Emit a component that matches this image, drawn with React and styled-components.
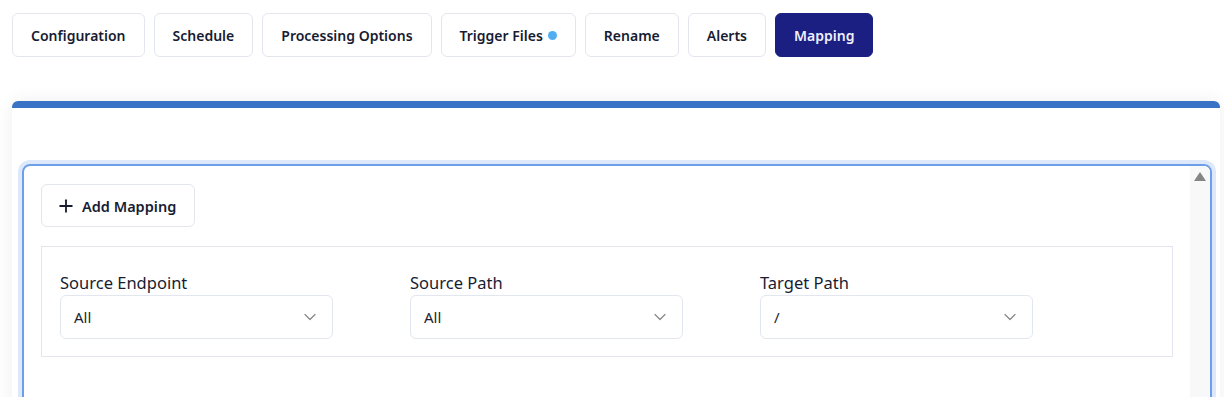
import React from 'react';
import styled, { createGlobalStyle } from 'styled-components';
import { Plus, ChevronDown } from 'lucide-react';

const GlobalStyle = createGlobalStyle`
	html, body {
		margin: 0;
		padding: 0;
		background: #fff;
		overflow: hidden;
		font-family: "Noto Sans", "Open Sans", sans-serif;
		color: #1e1e2d;
	}
	* {
		box-sizing: border-box;
	}
`;

const Page = styled.div`
	padding: 13px 4px 0 12px;
`;

const TabBar = styled.div`
	display: flex;
	gap: 9px;
	margin-bottom: 44px;
`;

const Tab = styled.button`
	display: flex;
	align-items: center;
	gap: 5px;
	height: 44px;
	padding: 0 18px;
	border: 1px solid ${p => (p.$active ? '#1b1f82' : '#e4e6ef')};
	border-radius: 6px;
	background: ${p => (p.$active ? '#1b1f82' : '#fff')};
	color: ${p => (p.$active ? '#eef0fb' : '#181c32')};
	font-family: inherit;
	font-size: 14px;
	font-weight: 600;
	cursor: pointer;
`;

const Dot = styled.span`
	width: 9px;
	height: 9px;
	border-radius: 50%;
	background: #52aef2;
`;

const Card = styled.div`
	background: #fff;
	border-top: 7px solid #3a72c6;
	border-radius: 6px 6px 0 0;
	box-shadow: 0 0 18px rgba(0, 0, 0, 0.07);
	padding: 56px 8px 0 10px;
`;

const Panel = styled.div`
	display: flex;
	height: 300px;
	border: 2px solid #6d9eea;
	border-radius: 8px;
	box-shadow: 0 0 0 4px #dde9fb;
	overflow: hidden;
`;

const PanelBody = styled.div`
	flex: 1;
	padding: 18px 17px 0 17px;
`;

const ScrollTrack = styled.div`
	width: 20px;
	background: #f8f8f8;
	display: flex;
	justify-content: center;
	padding-top: 6px;
`;

const ScrollArrow = styled.span`
	width: 0;
	height: 0;
	border-left: 6px solid transparent;
	border-right: 6px solid transparent;
	border-bottom: 9px solid #858585;
`;

const AddButton = styled.button`
	display: flex;
	align-items: center;
	gap: 6px;
	height: 43px;
	padding: 0 18px 0 14px;
	border: 1px solid #e4e6ef;
	border-radius: 6px;
	background: #fff;
	color: #181c32;
	font-family: inherit;
	font-size: 14.5px;
	font-weight: 600;
	margin-bottom: 19px;
	cursor: pointer;
`;

const MappingRow = styled.div`
	display: grid;
	grid-template-columns: repeat(3, 273px);
	column-gap: 77px;
	border: 1px solid #e4e6ef;
	padding: 26px 18px 17px;
`;

const Field = styled.div`
	display: flex;
	flex-direction: column;
`;

const Label = styled.label`
	font-size: 16.5px;
	line-height: 20px;
	color: #181c32;
	margin-bottom: 2px;
`;

const Select = styled.div`
	display: flex;
	align-items: center;
	justify-content: space-between;
	height: 44px;
	padding: 0 12px 0 13px;
	border: 1px solid #e2e6ee;
	border-radius: 6px;
	font-size: 15px;
	color: #1e1e2d;
	svg {
		color: #8a8a8a;
	}
`;

const tabs = ['Configuration', 'Schedule', 'Processing Options', 'Trigger Files', 'Rename', 'Alerts', 'Mapping'];

const fields = [
	{ label: 'Source Endpoint', value: 'All' },
	{ label: 'Source Path', value: 'All' },
	{ label: 'Target Path', value: '/' },
];

const App = () => (
	<Page>
		<GlobalStyle />
		<TabBar>
			{tabs.map(tab => (
				<Tab key={tab} $active={tab === 'Mapping'}>
					{tab}
					{tab === 'Trigger Files' && <Dot />}
				</Tab>
			))}
		</TabBar>
		<Card>
			<Panel>
				<PanelBody>
					<AddButton>
						<Plus size={20} strokeWidth={2.2} />
						Add Mapping
					</AddButton>
					<MappingRow>
						{fields.map(f => (
							<Field key={f.label}>
								<Label>{f.label}</Label>
								<Select>
									<span>{f.value}</span>
									<ChevronDown size={20} strokeWidth={1.5} />
								</Select>
							</Field>
						))}
					</MappingRow>
				</PanelBody>
				<ScrollTrack>
					<ScrollArrow />
				</ScrollTrack>
			</Panel>
		</Card>
	</Page>
);

export default App;
